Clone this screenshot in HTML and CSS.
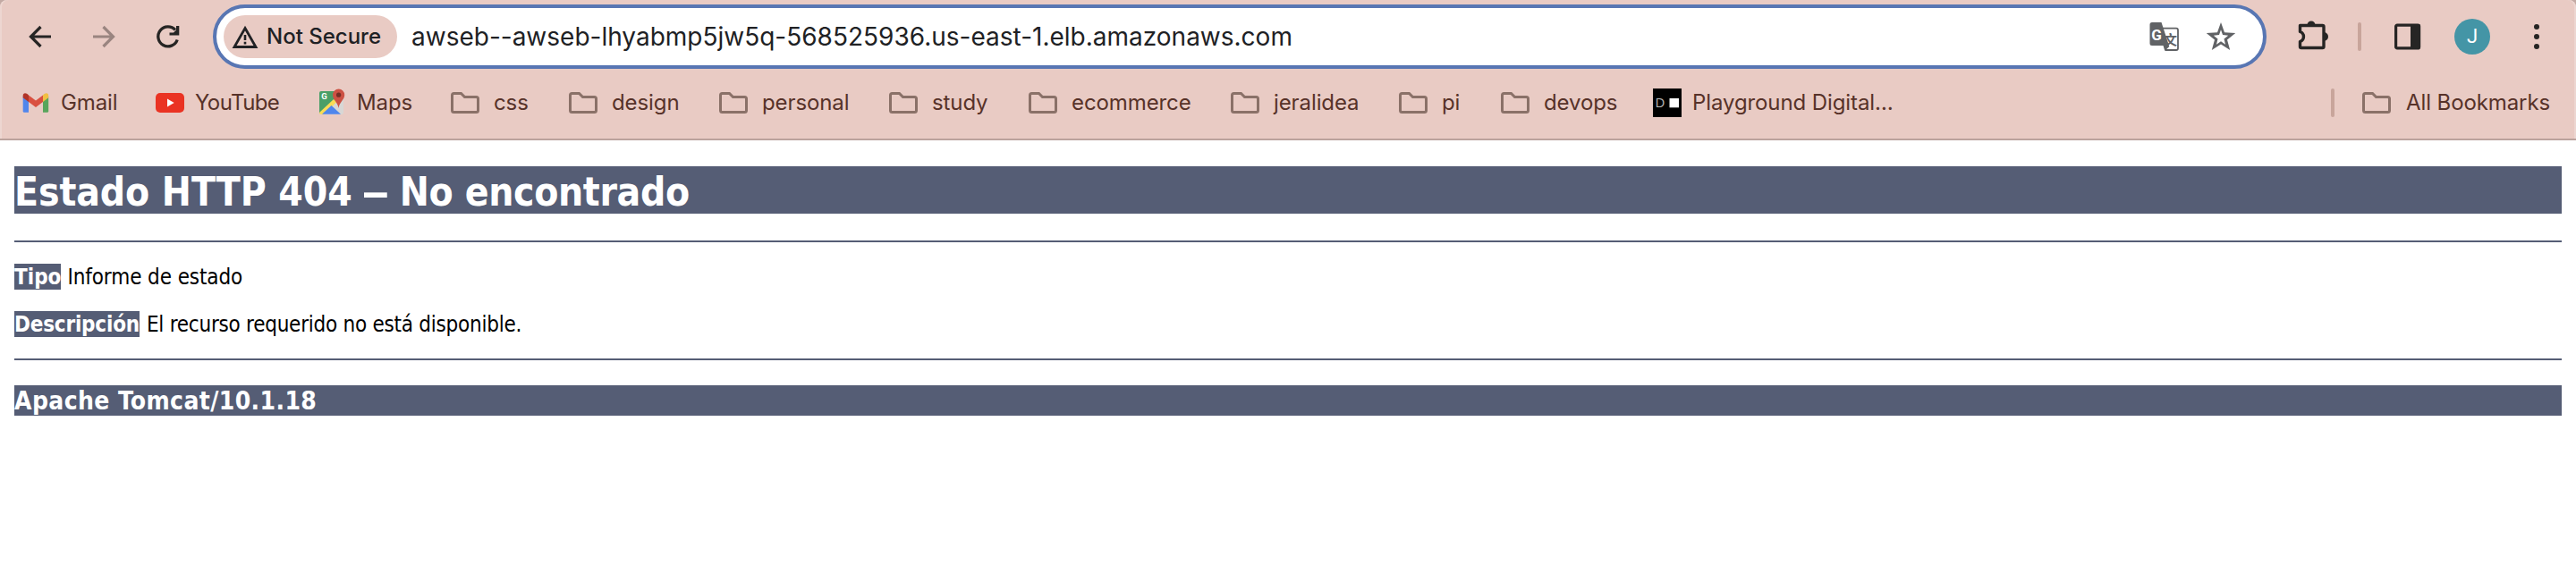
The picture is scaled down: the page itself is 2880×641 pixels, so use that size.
FILE: index.html
```
<!DOCTYPE html>
<html lang="es">
<head>
<meta charset="utf-8">
<title>Estado HTTP 404 – No encontrado</title>
<link rel="stylesheet" href="styles.css">
</head>
<body>
<svg width="0" height="0" class="defs">
  <symbol id="folder" viewBox="0 0 34 26">
    <path d="M4.5 2.5H12.5L16.5 6.5H29.5Q31.5 6.5 31.5 8.5V21.5Q31.5 23.500 29.500 23.500H4.500Q2.500 23.500 2.500 21.500V4.500Q2.500 2.500 4.500 2.500Z" fill="none" stroke="#8a7168" stroke-width="3"/>
  </symbol>
</svg>
<header class="chrome">
  <div class="toolbar">
    <nav class="nav">
      <svg width="26" height="26" viewBox="0 0 26 26"><path d="M25 13H3M13.500 2L2.500 13L13.500 24" fill="none" stroke="#262524" stroke-width="3.200"/></svg>
      <svg width="26" height="26" viewBox="0 0 26 26"><path d="M1 13H23M12.500 2L23.500 13L12.500 24" fill="none" stroke="#9a8580" stroke-width="3.200"/></svg>
      <svg width="28" height="28" viewBox="0 0 28 28"><path d="M24.200 17.500A11 11 0 1 1 22 6.500" fill="none" stroke="#262524" stroke-width="3.300"/><path d="M26.300 2V12.500H15.500V9.500H20L23 6.500V2Z" fill="#262524"/></svg>
    </nav>
    <div class="address">
      <div class="chip">
        <svg width="30" height="27" viewBox="0 0 30 27"><path d="M15 3.500L27 24.500H3Z" fill="none" stroke="#202124" stroke-width="2.800"/><path d="M15 11V17M15 18.700V21.500" stroke="#202124" stroke-width="2.600"/></svg>
        <span>Not Secure</span>
      </div>
      <span class="url">awseb--awseb-lhyabmp5jw5q-568525936.us-east-1.elb.amazonaws.com</span>
      <svg class="translate" width="34" height="34" viewBox="0 0 34 34">
        <path d="M15 7.700H30Q32 7.700 32 9.700V30Q32 32 30 32H18" fill="none" stroke="#606265" stroke-width="1.800"/>
        <path d="M3 1H13.500L22.300 28L17.300 33L15.500 27H3Q.500 27 .500 24.500V3.500Q.500 1 3 1Z" fill="#606265"/>
        <text x="2.200" y="20.500" class="tg">G</text>
        <text x="16" y="26" class="tc">文</text>
      </svg>
      <svg class="star" width="34" height="34" viewBox="0 0 34 34"><path fill-rule="evenodd" fill="#606265" d="M17 1L21 12.300L33.300 13L24 20.600L27.200 32L17 25.500L6.800 32L10 20.600L.700 13L13 12.300ZM17 9.200L15 15L8.800 15.700L13.500 19.600L12 25.700L17 22.300L22 25.700L20.500 19.600L25.200 15.700L19 15Z"/></svg>
    </div>
    <svg class="puzzle" width="34" height="35" viewBox="0 0 34 35"><path d="M2.500 6.500H27.500Q29 6.500 29 8V30Q29 31.500 27.500 31.500H4Q2.500 31.500 2.500 30V24.500A5.800 5.800 0 0 0 2.500 13.500Z" fill="none" stroke="#262524" stroke-width="3.400" stroke-linejoin="round"/><path d="M10.500 6A4.500 4.500 0 0 1 19.500 6ZM29 14A5 5 0 0 1 29 24Z" fill="#262524"/></svg>
    <i class="bar"></i>
    <svg class="panel" width="30" height="30" viewBox="0 0 30 30"><rect x="1.600" y="2.100" width="26" height="25.800" rx="1.500" fill="none" stroke="#262524" stroke-width="3.200"/><path d="M18 1H27Q29 1 29 3V27Q29 29 27 29H18Z" fill="#262524"/></svg>
    <div class="avatar">J</div>
    <svg class="dots" width="6" height="28" viewBox="0 0 6 28"><g fill="#262524"><circle cx="3" cy="3" r="3"/><circle cx="3" cy="14" r="3"/><circle cx="3" cy="25" r="3"/></g></svg>
  </div>
  <div class="bookmarks">
    <a class="site"><svg width="32" height="32" viewBox="0 0 32 32">
      <path d="M1.700 9L8 13.700V26.700H3.200Q1.700 26.700 1.700 25.200Z" fill="#5186ec"/>
      <path d="M30.200 9L24 13.700V26.700H28.700Q30.200 26.700 30.200 25.200Z" fill="#58a55c"/>
      <path d="M8 7.500L16 13.500L24 7.500V15L16 21L8 15Z" fill="#d95040"/>
      <path d="M8 7.500V15L1.700 10.300V8C1.700 4.800 5 4 8 7.500Z" fill="#b13428"/>
      <path d="M24 7.500V15L30.200 10.300V8C30.200 4.800 27 4 24 7.500Z" fill="#f1bf42"/></svg><span>Gmail</span></a>
    <a class="site yt"><svg width="32" height="32" viewBox="0 0 32 32"><rect y="5" width="32" height="22" rx="5" fill="#ea3323"/><path d="M13 11.500L20.700 16L13 20.500Z" fill="#fff"/></svg><span>YouTube</span></a>
    <a class="site"><svg width="32" height="32" viewBox="0 0 32 32">
      <path d="M4 3H26L29 8V27Q29 29 27 29H4Q2 29 2 27V5Q2 3 4 3Z" fill="#d8d7d5"/>
      <path d="M4 3H22L25 9L2 28V5Q2 3 4 3Z" fill="#4a9f67"/>
      <path d="M2 27L18 12L21.500 15L7 29H4Q2 29 2 27Z" fill="#f9dc56"/>
      <path d="M5 28.700L15.500 19L26 28.700Z" fill="#4f86ec"/>
      <path d="M23.500 22C22.800 15.500 17 12.500 17 7.200A6.600 6.600 0 0 1 30.200 7.200C30.200 12.500 24.200 15.500 23.500 22Z" fill="#cc5143"/>
      <circle cx="23.600" cy="7.200" r="2.600" fill="#742e26"/><text x="4.300" y="12.200" class="mg">G</text></svg><span>Maps</span></a>
    <a><svg width="34" height="26"><use href="#folder"/></svg><span>css</span></a>
    <a><svg width="34" height="26"><use href="#folder"/></svg><span>design</span></a>
    <a><svg width="34" height="26"><use href="#folder"/></svg><span>personal</span></a>
    <a><svg width="34" height="26"><use href="#folder"/></svg><span>study</span></a>
    <a><svg width="34" height="26"><use href="#folder"/></svg><span>ecommerce</span></a>
    <a><svg width="34" height="26"><use href="#folder"/></svg><span>jeralidea</span></a>
    <a><svg width="34" height="26"><use href="#folder"/></svg><span>pi</span></a>
    <a><svg width="34" height="26"><use href="#folder"/></svg><span>devops</span></a>
    <a class="site"><svg width="32" height="32" viewBox="0 0 32 32"><rect width="32" height="32"/><text x="2.500" y="21" class="pd">D</text><rect x="18.500" y="11" width="10.500" height="10.300" fill="#fff"/></svg><span>Playground Digital…</span></a>
    <i class="bar"></i>
    <a class="all"><svg width="34" height="26"><use href="#folder"/></svg><span>All Bookmarks</span></a>
  </div>
</header>
<main class="page">
  <h1>Estado HTTP 404 <span class="dash">–</span> <span class="tail">No encontrado</span></h1>
  <hr>
  <p class="type"><b>Tipo</b><span>Informe de estado</span></p>
  <p class="desc"><b>Descripción</b><span>El recurso requerido no está disponible.</span></p>
  <hr>
  <h3>Apache Tomcat/10.1.18</h3>
</main>
</body>
</html>
```
FILE: styles.css
```
* { box-sizing: border-box; }
body {
  margin: 0;
  height: 641px;
  overflow: hidden;
  background: linear-gradient(#c3aaa4 20px, #fff 20px);
  font-family: Inter, "Liberation Sans", sans-serif;
}
svg { display: block; flex: none; }
.defs { position: absolute; }
.chrome {
  height: 157px;
  padding-top: 5px;
  background: #e9cbc4;
  border-bottom: 2px solid #bba39d;
  border-radius: 8px 8px 0 0;
  box-shadow: inset 2px 0 #edd6d1, inset -2px 0 #edd6d1;
}
.toolbar {
  display: flex;
  align-items: center;
  height: 72px;
}
.nav {
  display: flex;
  align-items: center;
  gap: 45px;
  width: 238px;
  padding-left: 32px;
}
.address {
  display: flex;
  align-items: center;
  width: 2296px;
  height: 72px;
  padding: 0 30px 0 8px;
  border: 4px solid #5876b3;
  border-radius: 36px;
  background: #fff;
  color: #202124;
}
.chip {
  display: flex;
  align-items: center;
  gap: 9px;
  width: 194px;
  height: 48px;
  padding-left: 9px;
  border-radius: 24px;
  background: #e9cbc4;
  font-size: 24px;
  font-weight: 500;
  white-space: nowrap;
}
.chip span { padding-bottom: 2px; }
.url {
  margin-left: 16px;
  font-size: 28px;
  white-space: nowrap;
}
.translate { margin-left: auto; }
.star { margin-left: 29px; }
.tg { font: 700 17px Roboto, sans-serif; fill: #fff; }
.tc { font: 700 15px "Noto Sans CJK SC", sans-serif; fill: #606265; }
.mg { font: 700 9.500px Roboto, sans-serif; fill: #fff; }
.pd { font: 400 15px "Open Sans", sans-serif; fill: #bbb; }
.puzzle { margin: -4px 0 0 35px; }
.bar {
  flex: none;
  width: 4px;
  height: 32px;
  border-radius: 2px;
  background: #c8a59b;
}
.toolbar .bar { margin-left: 33px; }
.panel { margin-left: 37px; }
.avatar {
  width: 40px;
  height: 40px;
  margin-left: 37px;
  border-radius: 50%;
  background: #4495a6;
  color: #fff;
  font: 400 22px/39px Roboto, sans-serif;
  text-align: center;
}
.dots { margin-left: 49px; }
.bookmarks {
  display: grid;
  grid-template-columns: 150px 181px 148px 132px 168px 190px 156px 226px 188px 114px 171px 758px 34px 220px;
  align-items: center;
  height: 76px;
  padding-left: 24px;
  color: #573229;
  font-size: 24px;
  letter-spacing: -0.1px;
}
.bookmarks a {
  display: flex;
  align-items: center;
  gap: 15px;
  white-space: nowrap;
}
.bookmarks span { padding-bottom: 2px; }
.bookmarks .site { gap: 12px; }
.bookmarks .all { gap: 16px; }
.yt span { letter-spacing: -0.600px; }
.page {
  padding: 29px 16px 0;
  font-family: "DejaVu Sans Condensed", "DejaVu Sans", sans-serif;
  color: #000;
}
h1, h3, b {
  margin: 0;
  background: #555d75;
  color: #fff;
}
h1 {
  height: 53px;
  padding-top: 5px;
  font-size: 44px;
  line-height: 48px;
  letter-spacing: -0.1px;
}
.dash {
  display: inline-block;
  margin: 0 3px;
  transform: scaleX(1.65);
}
.tail { letter-spacing: -0.350px; }
hr {
  height: 2px;
  margin: 30px 0 24px;
  border: 0;
  background: #555d75;
}
p {
  display: flex;
  height: 29px;
  margin: 0 0 24px;
  font-size: 24px;
  line-height: 27px;
}
p b, p span { padding-top: 2px; }
.type span { margin-left: 7px; letter-spacing: -0.100px; }
.desc b { letter-spacing: -0.200px; }
.desc span { margin-left: 8px; letter-spacing: -0.250px; }
p + hr { margin: 24px 0 28px; }
h3 {
  height: 34px;
  padding-top: 2px;
  font-size: 28px;
  line-height: 32px;
  letter-spacing: 0.380px;
}
```
